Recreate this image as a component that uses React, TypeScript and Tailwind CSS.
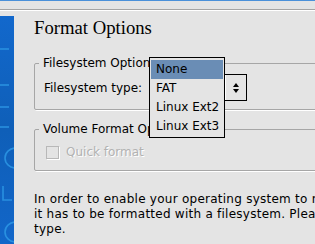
const items = ["None", "FAT", "Linux Ext2", "Linux Ext3"];

const SideBrand = () => (
  <svg width="14" height="228" viewBox="0 0 14 228" className="block">
    <g stroke="#2f9be8" strokeWidth="1.6" fill="none" opacity="0.8">
      <path d="M0 33 H9" />
      <path d="M0 69 H9" />
      <path d="M0 91 H9" />
      <path d="M0 111 H9" />
      <ellipse cx="16" cy="142" rx="11" ry="10" />
      <path d="M3 170 V184 H12" />
      <ellipse cx="16" cy="216" rx="11" ry="10" />
    </g>
  </svg>
);

const SpinArrows = () => (
  <svg width="8" height="12" viewBox="0 0 8 12">
    <path d="M4 1 L7 5 H1 Z" fill="#000" />
    <path d="M4 11 L7 7 H1 Z" fill="#000" />
  </svg>
);

const App = () => {
  return (
    <div
      className="relative w-[315px] h-[244px] overflow-hidden bg-[#e4e4e4] text-black"
      style={{ fontFamily: '"DejaVu Sans", sans-serif' }}
    >
      <div className="h-px bg-[#4a90d9]" />
      <div className="h-[8px]" />
      <div className="h-px bg-[#a4a4a4]" />
      <div className="h-px bg-white" />

      <div className="flex mt-[5px]">
        <div className="w-[14px] h-[228px] shrink-0 overflow-hidden bg-gradient-to-b from-[#1268cc] via-[#0f5fb8] to-[#1266c9]">
          <SideBrand />
        </div>

        <div className="pl-[20px] w-[420px] shrink-0">
          <h1 className="text-[18.7px] leading-[24px] font-['Liberation_Serif',serif]">
            Format Options
          </h1>

          <fieldset className="mt-[16px] border border-[#a6a6a6] rounded-[2px] shadow-[1px_1px_0_#fff] pl-[9px] pt-[4px] pb-[8px]">
            <legend className="text-[12px] leading-[14px] -ml-[5px] pl-[4px]">Filesystem Options</legend>
            <div className="flex items-center text-[12px] leading-[14px]">
              <span className="whitespace-nowrap shrink-0">Filesystem type:</span>
              <div className="ml-[9px] flex h-[27px] w-[96px] shrink-0 border border-black bg-white">
                <div className="flex-1 px-[4px] flex items-center">None</div>
                <div className="w-[21px] flex items-center justify-center bg-[#e4e4e4] border-l border-white">
                  <SpinArrows />
                </div>
              </div>
            </div>
          </fieldset>

          <fieldset className="mt-[12px] border border-[#a6a6a6] rounded-[2px] shadow-[1px_1px_0_#fff] pl-[11px] pt-[9px] pb-[11px]">
            <legend className="text-[12px] leading-[14px] -ml-[7px] pl-[4px]">Volume Format Options</legend>
            <label className="flex items-center text-[12px] leading-[14px] text-[#b2b2b2] [text-shadow:1px_1px_0_#fff]">
              <span className="w-[13px] h-[13px] border border-[#b8b8b8] shadow-[1px_1px_0_#fff]" />
              <span className="ml-[7px]">Quick format</span>
            </label>
          </fieldset>

          <p className="mt-[21px] text-[12px] leading-[15px] tracking-[0.25px] whitespace-nowrap">
            In order to enable your operating system to mount this partition,
            <br />
            it has to be formatted with a filesystem. Please select a filesystem
            <br />
            type.
          </p>
        </div>
      </div>

      <div className="absolute left-[149px] top-[57px] w-[76px] h-[81px] border border-black bg-[#e4e4e4] pt-[2px] px-px text-[12px]">
        {items.map((item, i) => (
          <div
            key={item}
            className={
              i === 0
                ? "h-[19px] leading-[19px] pl-[5px] bg-[#6a8db5]"
                : "h-[19px] leading-[19px] pl-[5px]"
            }
          >
            {item}
          </div>
        ))}
      </div>
    </div>
  );
};

export default App;
